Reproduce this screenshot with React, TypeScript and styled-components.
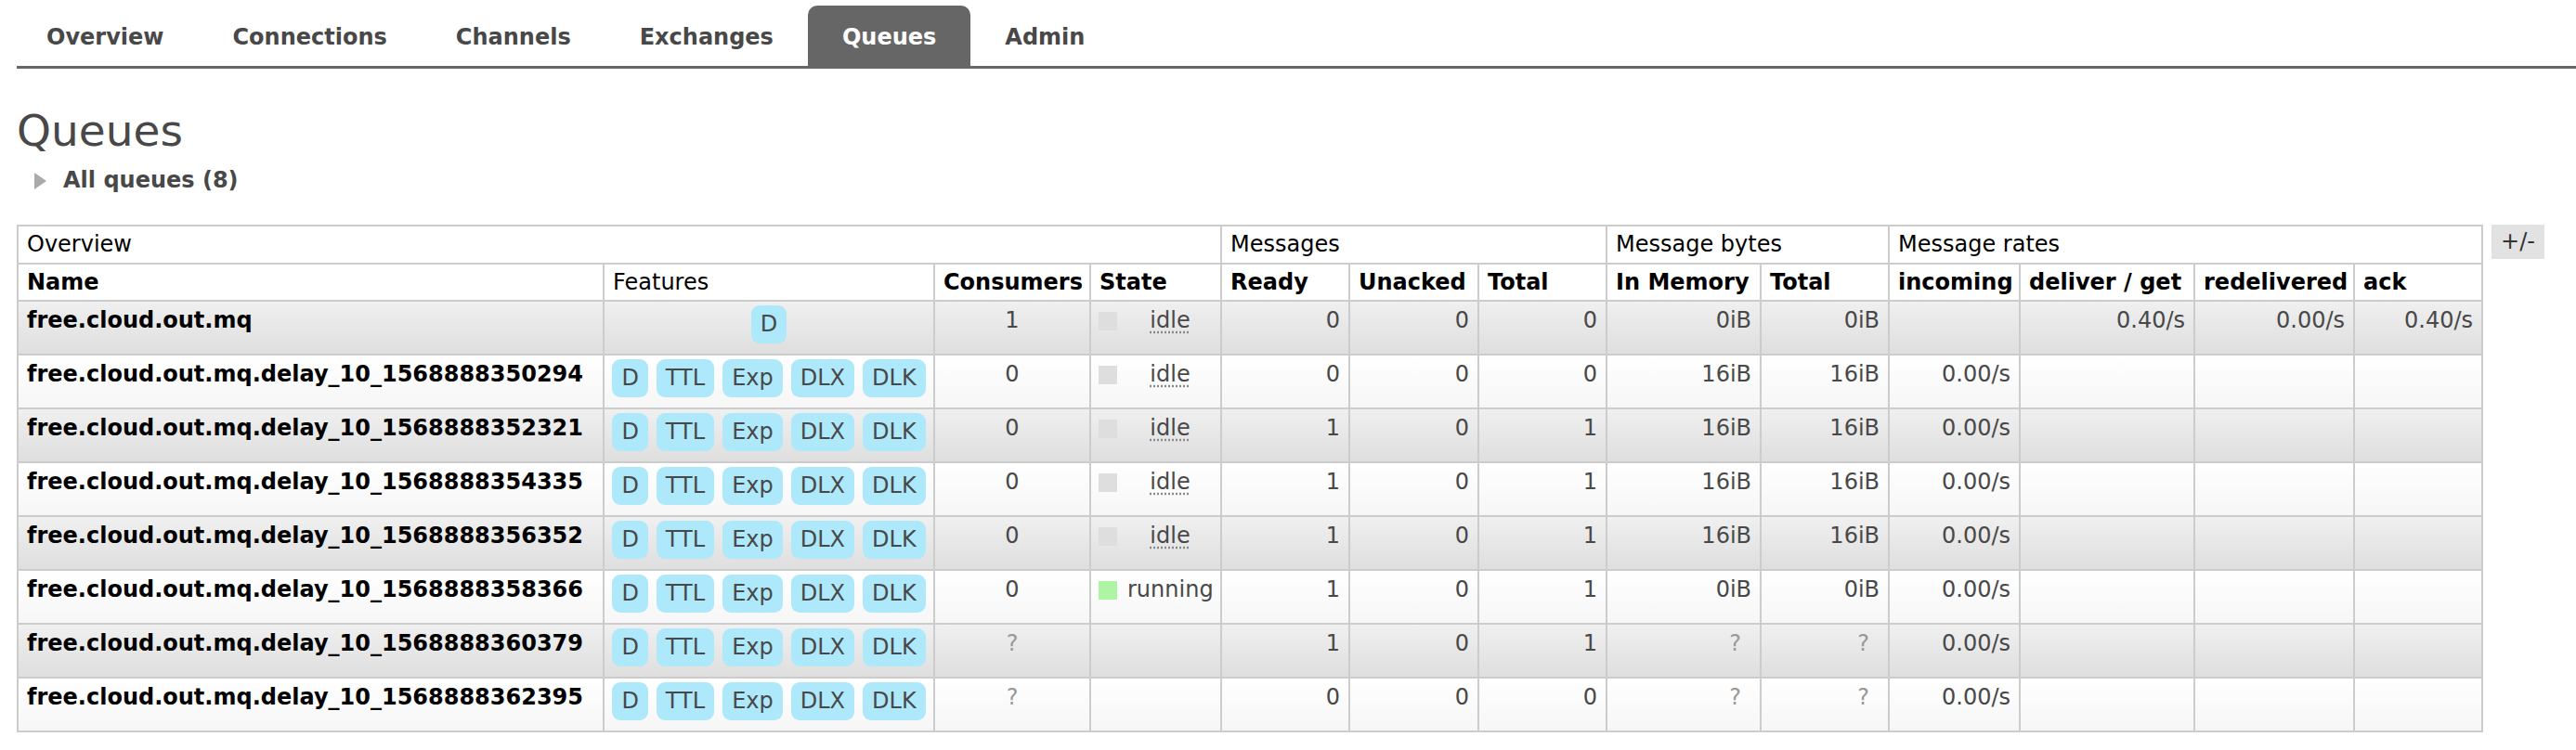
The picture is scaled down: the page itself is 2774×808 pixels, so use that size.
import React from "react";
import styled, { createGlobalStyle } from "styled-components";

const GlobalStyle = createGlobalStyle`
  html, body { margin: 0; padding: 0; background: #fff; }
  body { font-family: "DejaVu Sans", Verdana, sans-serif; color: #484848; }
`;

const Page = styled.div`
  width: 2774px;
  height: 808px;
  overflow: hidden;
`;

const Nav = styled.nav`
  margin-left: 18px;
  border-bottom: 3px solid #666;
`;

const TabList = styled.ul`
  list-style: none;
  margin: 0 0 0 -5px;
  padding: 6px 0 0;
  display: flex;
`;

const Tab = styled.li<{ $active?: boolean }>`
  height: 65px;
  line-height: 69px;
  padding: 0 37px;
  font-size: 24px;
  font-weight: bold;
  border-radius: 10px 10px 0 0;
  background: ${(p) => (p.$active ? "#666" : "transparent")};
  color: ${(p) => (p.$active ? "#fff" : "#484848")};
`;

const Main = styled.main`
  padding-left: 18px;
`;

const Title = styled.h1`
  margin: 39px 0 0;
  font-size: 47px;
  font-weight: normal;
  line-height: 55px;
  color: #484848;
`;

const Summary = styled.div`
  margin-top: 12px;
  display: flex;
  align-items: center;
  gap: 18px;
  padding-left: 19px;
  height: 29px;
  line-height: 29px;
  font-size: 24px;
  font-weight: bold;
  color: #484848;
`;

const TableArea = styled.div`
  margin-top: 33px;
  display: flex;
  align-items: flex-start;
  gap: 9px;
`;

const Table = styled.table`
  border-collapse: collapse;
  table-layout: fixed;
  width: 2656px;
  border: 2px solid #ccc;
  font-size: 24px;
  line-height: 29px;
`;

const Col = styled.col<{ $w: number }>`
  width: ${(p) => p.$w}px;
`;

const GroupTh = styled.th`
  box-sizing: border-box;
  height: 41px;
  padding: 5px 9px 0;
  border: 2px solid #ccc;
  text-align: left;
  vertical-align: top;
  font-weight: normal;
  color: #000;
  background: #fff;
`;

const ColTh = styled.th<{ $plain?: boolean }>`
  box-sizing: border-box;
  height: 40px;
  padding: 5px 9px 0;
  border: 2px solid #ccc;
  text-align: left;
  vertical-align: top;
  white-space: nowrap;
  font-weight: ${(p) => (p.$plain ? "normal" : "bold")};
  color: #000;
  background: #fff;
`;

const Row = styled.tr<{ $alt: boolean }>`
  background: ${(p) =>
    p.$alt
      ? "linear-gradient(#f0f0f0, #dedede)"
      : "linear-gradient(#ffffff, #f6f6f6)"};
`;

const Cell = styled.td`
  box-sizing: border-box;
  height: 58px;
  padding: 6px 9px 0;
  border: 2px solid #ccc;
  vertical-align: top;
  white-space: nowrap;
  color: #484848;
`;

const NameCell = styled(Cell)`
  padding-top: 6px;
  font-weight: bold;
  color: #000;
`;

const NumCell = styled(Cell)<{ $center?: boolean }>`
  text-align: ${(p) => (p.$center ? "center" : "right")};
`;

const FeatureCell = styled(Cell)`
  padding-top: 4px;
`;

const Badges = styled.div`
  display: flex;
  justify-content: center;
  gap: 9px;
`;

const Badge = styled.span`
  display: inline-block;
  padding: 6px 10px;
  border-radius: 9px;
  background: #aee8fb;
  color: #484848;
  line-height: 29px;
`;

const StateCell = styled(Cell)`
  padding: 6px 8px 0;
`;

const StateBox = styled.div`
  display: flex;
  align-items: flex-start;
`;

const StateDot = styled.span<{ $color: string }>`
  flex: none;
  width: 20px;
  height: 20px;
  margin-top: 5px;
  background: ${(p) => p.$color};
`;

const StateLabel = styled.span`
  flex: 1;
  padding-left: 11px;
  text-align: center;
`;

const Abbr = styled.span`
  text-decoration: underline dotted #888;
  text-underline-offset: 4px;
`;

const Unknown = styled.span<{ $inset?: boolean }>`
  color: #999;
  margin-right: ${(p) => (p.$inset ? "11px" : "0")};
`;

const ToggleButton = styled.div`
  height: 37px;
  padding: 0 10px;
  line-height: 37px;
  font-size: 24px;
  color: #333;
  background: #e2e2e2;
`;

type Queue = {
  name: string;
  full: boolean;
  consumers: string;
  state: "idle" | "running" | "";
  ready: string;
  unacked: string;
  total: string;
  mem: string;
  bytes: string;
  incoming: string;
  deliver: string;
  redelivered: string;
  ack: string;
};

const base = "free.cloud.out.mq";

const queues: Queue[] = [
  { name: base, full: false, consumers: "1", state: "idle", ready: "0", unacked: "0", total: "0", mem: "0iB", bytes: "0iB", incoming: "", deliver: "0.40/s", redelivered: "0.00/s", ack: "0.40/s" },
  { name: base + ".delay_10_1568888350294", full: true, consumers: "0", state: "idle", ready: "0", unacked: "0", total: "0", mem: "16iB", bytes: "16iB", incoming: "0.00/s", deliver: "", redelivered: "", ack: "" },
  { name: base + ".delay_10_1568888352321", full: true, consumers: "0", state: "idle", ready: "1", unacked: "0", total: "1", mem: "16iB", bytes: "16iB", incoming: "0.00/s", deliver: "", redelivered: "", ack: "" },
  { name: base + ".delay_10_1568888354335", full: true, consumers: "0", state: "idle", ready: "1", unacked: "0", total: "1", mem: "16iB", bytes: "16iB", incoming: "0.00/s", deliver: "", redelivered: "", ack: "" },
  { name: base + ".delay_10_1568888356352", full: true, consumers: "0", state: "idle", ready: "1", unacked: "0", total: "1", mem: "16iB", bytes: "16iB", incoming: "0.00/s", deliver: "", redelivered: "", ack: "" },
  { name: base + ".delay_10_1568888358366", full: true, consumers: "0", state: "running", ready: "1", unacked: "0", total: "1", mem: "0iB", bytes: "0iB", incoming: "0.00/s", deliver: "", redelivered: "", ack: "" },
  { name: base + ".delay_10_1568888360379", full: true, consumers: "?", state: "", ready: "1", unacked: "0", total: "1", mem: "?", bytes: "?", incoming: "0.00/s", deliver: "", redelivered: "", ack: "" },
  { name: base + ".delay_10_1568888362395", full: true, consumers: "?", state: "", ready: "0", unacked: "0", total: "0", mem: "?", bytes: "?", incoming: "0.00/s", deliver: "", redelivered: "", ack: "" },
];

const colWidths = [631, 356, 168, 141, 138, 139, 138, 166, 138, 141, 188, 172, 138];

const columns: { label: string; plain?: boolean }[] = [
  { label: "Name" },
  { label: "Features", plain: true },
  { label: "Consumers" },
  { label: "State" },
  { label: "Ready" },
  { label: "Unacked" },
  { label: "Total" },
  { label: "In Memory" },
  { label: "Total" },
  { label: "incoming" },
  { label: "deliver / get" },
  { label: "redelivered" },
  { label: "ack" },
];

const tabs = ["Overview", "Connections", "Channels", "Exchanges", "Queues", "Admin"];

const Num = ({ v, center }: { v: string; center?: boolean }) => (
  <NumCell $center={center}>
    {v === "?" ? <Unknown $inset={!center}>?</Unknown> : v}
  </NumCell>
);

export default function App() {
  return (
    <Page>
      <GlobalStyle />
      <Nav>
        <TabList>
          {tabs.map((t) => (
            <Tab key={t} $active={t === "Queues"}>
              {t}
            </Tab>
          ))}
        </TabList>
      </Nav>
      <Main>
        <Title>Queues</Title>
        <Summary>
          <svg width="13" height="18" viewBox="0 0 13 18">
            <polygon points="0,0 13,9 0,18" fill="#aaa" />
          </svg>
          <span>All queues (8)</span>
        </Summary>
        <TableArea>
          <Table>
            <colgroup>
              {colWidths.map((w, i) => (
                <Col key={i} $w={w} />
              ))}
            </colgroup>
            <thead>
              <tr>
                <GroupTh colSpan={4}>Overview</GroupTh>
                <GroupTh colSpan={3}>Messages</GroupTh>
                <GroupTh colSpan={2}>Message bytes</GroupTh>
                <GroupTh colSpan={4}>Message rates</GroupTh>
              </tr>
              <tr>
                {columns.map((c, i) => (
                  <ColTh key={i} $plain={c.plain}>
                    {c.label}
                  </ColTh>
                ))}
              </tr>
            </thead>
            <tbody>
              {queues.map((q, i) => (
                <Row key={q.name} $alt={i % 2 === 0}>
                  <NameCell>{q.name}</NameCell>
                  <FeatureCell>
                    <Badges>
                      {(q.full ? ["D", "TTL", "Exp", "DLX", "DLK"] : ["D"]).map((f) => (
                        <Badge key={f}>{f}</Badge>
                      ))}
                    </Badges>
                  </FeatureCell>
                  <Num v={q.consumers} center />
                  <StateCell>
                    {q.state && (
                      <StateBox>
                        <StateDot $color={q.state === "running" ? "#adf5a2" : "#dedede"} />
                        <StateLabel>
                          {q.state === "idle" ? <Abbr>idle</Abbr> : q.state}
                        </StateLabel>
                      </StateBox>
                    )}
                  </StateCell>
                  <Num v={q.ready} />
                  <Num v={q.unacked} />
                  <Num v={q.total} />
                  <Num v={q.mem} />
                  <Num v={q.bytes} />
                  <Num v={q.incoming} />
                  <Num v={q.deliver} />
                  <Num v={q.redelivered} />
                  <Num v={q.ack} />
                </Row>
              ))}
            </tbody>
          </Table>
          <ToggleButton>+/-</ToggleButton>
        </TableArea>
      </Main>
    </Page>
  );
}
